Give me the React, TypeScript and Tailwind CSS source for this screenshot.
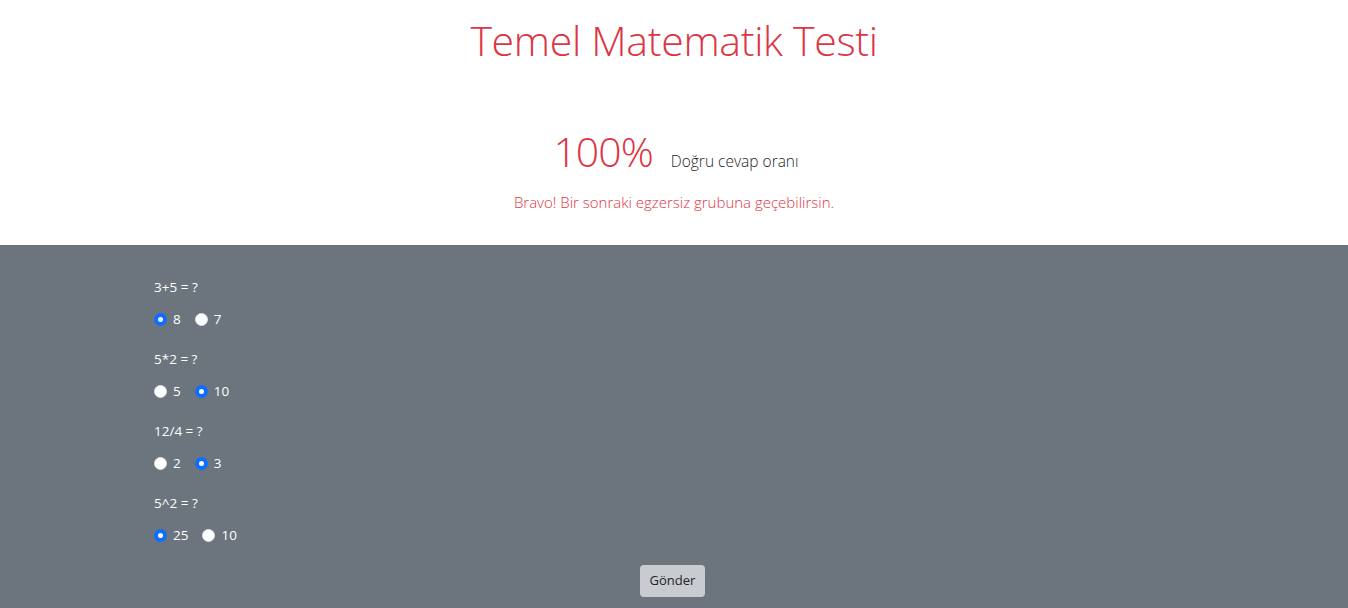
import React from "react";

const questions = [
  { q: "3+5 = ?", opts: ["8", "7"], sel: 0 },
  { q: "5*2 = ?", opts: ["5", "10"], sel: 1 },
  { q: "12/4 = ?", opts: ["2", "3"], sel: 1 },
  { q: "5^2 = ?", opts: ["25", "10"], sel: 0 },
];

function Radio({ checked }: { checked: boolean }) {
  return checked ? (
    <span className="w-[13px] h-[13px] rounded-full bg-[#0d6efd] flex items-center justify-center">
      <span className="w-[5px] h-[5px] rounded-full bg-white" />
    </span>
  ) : (
    <span className="w-[13px] h-[13px] rounded-full bg-white border border-[#dee2e6]" />
  );
}

export default function App() {
  return (
    <div className="min-h-[608px] font-['Open_Sans',sans-serif]">
      <div className="bg-white h-[245px] flex flex-col items-center">
        <h1 className="mt-[10px] text-[41px] leading-[60px] font-light text-[#dc3545] tracking-[-0.3px]">
          Temel Matematik Testi
        </h1>
        <div className="mt-[56px] flex items-baseline gap-[18px] ml-[4px]">
          <span className="text-[41px] leading-[50px] font-light text-[#dc3545] tracking-[-1px]">100%</span>
          <span className="text-[15.5px] text-[#212529] font-light">Doğru cevap oranı</span>
        </div>
        <div className="mt-[15px] text-[15px] font-light text-[#dc3545]">
          Bravo! Bir sonraki egzersiz grubuna geçebilirsin.
        </div>
      </div>
      <div className="bg-[#6c757d] h-[363px]">
        <div className="pt-[32px] pl-[154px] flex flex-col gap-[20px]">
          {questions.map((item, i) => (
            <div key={i} className="flex flex-col gap-[12px]">
              <div className="text-[13.5px] leading-[20px] text-white">{item.q}</div>
              <div className="flex items-center h-[20px] gap-[14px]">
                {item.opts.map((o, j) => (
                  <label key={j} className="flex items-center gap-[6px] text-[13.5px] text-white">
                    <Radio checked={item.sel === j} />
                    <span>{o}</span>
                  </label>
                ))}
              </div>
            </div>
          ))}
        </div>
        <div className="flex justify-center mt-[20px]">
          <button className="ml-[-3px] h-[32px] px-[10px] rounded-[4px] bg-[#c8cbcf] text-[#212529] text-[13px]">
            Gönder
          </button>
        </div>
      </div>
    </div>
  );
}
